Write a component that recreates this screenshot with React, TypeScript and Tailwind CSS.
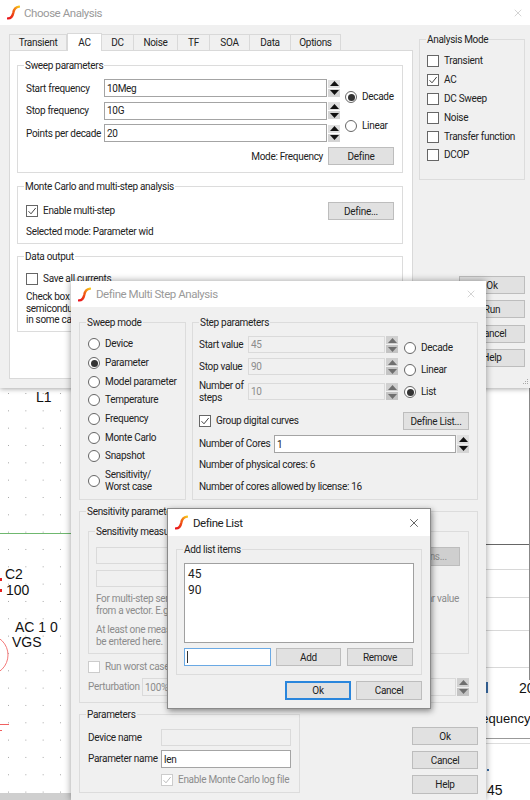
import type { ReactNode } from 'react'
import { X } from 'lucide-react'

const tabs = [
  { name: 'Transient', w: 'w-[58px]' },
  { name: 'AC', w: 'w-[35px]' },
  { name: 'DC', w: 'w-[32px]' },
  { name: 'Noise', w: 'w-[44px]' },
  { name: 'TF', w: 'w-[32px]' },
  { name: 'SOA', w: 'w-[40px]' },
  { name: 'Data', w: 'w-[41px]' },
  { name: 'Options', w: 'w-[50px]' },
]

function Logo() {
  return (
    <svg width="13" height="15" viewBox="0 0 13 15" className="shrink-0">
      <defs>
        <linearGradient id="logoGrad" gradientUnits="userSpaceOnUse" x1="1" y1="14" x2="12" y2="1">
          <stop offset="0" stopColor="#e8101c" />
          <stop offset="0.55" stopColor="#f05a14" />
          <stop offset="1" stopColor="#f8c81c" />
        </linearGradient>
      </defs>
      <path d="M1 13.4C5 13.4 5.8 10.4 6.4 7.4C7 4 8.6 2 12 1.6" fill="none" stroke="url(#logoGrad)" strokeWidth="2.4" strokeLinecap="round" />
    </svg>
  )
}

function Group({ title, bg, className, children }: { title: string; bg: string; className: string; children: ReactNode }) {
  return (
    <div className={`relative border border-[#dcdcdc] ${className}`}>
      <span className={`absolute -top-[7px] left-[6px] whitespace-nowrap px-[1px] leading-[14px] text-[#222] ${bg}`}>{title}</span>
      {children}
    </div>
  )
}

function Radio({ on }: { on?: boolean }) {
  return (
    <span className="flex h-[12px] w-[12px] shrink-0 items-center justify-center rounded-full border border-[#666] bg-white">
      {on && <span className="h-[7px] w-[7px] rounded-full bg-[#333]" />}
    </span>
  )
}

function Check({ on, dim }: { on?: boolean; dim?: boolean }) {
  return (
    <span className={`flex h-[12px] w-[12px] shrink-0 items-center justify-center border bg-white ${dim ? 'border-[#ccc]' : 'border-[#666]'}`}>
      {on && (
        <svg width="10" height="10" viewBox="0 0 10 10" fill="none" stroke={dim ? '#bbb' : '#444'} strokeWidth="1">
          <path d="M1.5 5.2L4 7.8L8.7 2" />
        </svg>
      )}
    </span>
  )
}

function Spin({ dim, className = 'h-[17px]' }: { dim?: boolean; className?: string }) {
  const fill = dim ? '#6f6f6f' : '#111'
  return (
    <div className={`flex w-[12px] shrink-0 flex-col gap-px ${className}`}>
      <div className={`flex flex-1 items-center justify-center ${dim ? 'bg-[#d0d0d0]' : 'bg-[#e0e0e0]'}`}>
        <svg width="9" height="5" viewBox="0 0 9 5"><path d="M4.5 0L9 5H0Z" fill={fill} /></svg>
      </div>
      <div className={`flex flex-1 items-center justify-center ${dim ? 'bg-[#c4c4c4]' : 'bg-[#d4d4d4]'}`}>
        <svg width="9" height="5" viewBox="0 0 9 5"><path d="M0 0H9L4.5 5Z" fill={fill} /></svg>
      </div>
    </div>
  )
}

function Field({ value, dim, className }: { value?: string; dim?: boolean; className: string }) {
  return (
    <div className={`flex items-center overflow-hidden border pl-[2px] pt-px ${dim ? 'border-[#dadada] bg-[#f0f0f0] text-[#8c8c8c]' : 'border-[#a4a4a4] bg-white'} ${className}`}>
      {value}
    </div>
  )
}

function Btn({ label, dim, blue, className = 'h-[18px] w-[66px]' }: { label: string; dim?: boolean; blue?: boolean; className?: string }) {
  return (
    <div className={`flex shrink-0 items-center justify-center border pt-px ${blue ? 'border-2 border-[#2a86dc]' : 'border-[#bdbdbd]'} ${dim ? 'bg-[#cfcfcf] text-[#8c8c8c]' : 'bg-[#e1e1e1]'} ${className}`}>
      {label}
    </div>
  )
}

function Chooser({ label, on, className = 'h-[18.8px]' }: { label: string; on?: boolean; className?: string }) {
  return (
    <div className={`flex items-center gap-[5px] whitespace-nowrap ${className}`}>
      <Check on={on} />
      <span>{label}</span>
    </div>
  )
}

function RadioRow({ label, on, className = 'h-[18.7px]' }: { label: ReactNode; on?: boolean; className?: string }) {
  return (
    <div className={`flex items-center gap-[5px] whitespace-nowrap leading-[12px] ${className}`}>
      <Radio on={on} />
      <span>{label}</span>
    </div>
  )
}

function SweepRow({ label, value }: { label: string; value: string }) {
  return (
    <div className="flex h-[18px] items-center">
      <span className="w-[78px] shrink-0 whitespace-nowrap pt-px">{label}</span>
      <Field value={value} className="h-[18px] w-[223px]" />
      <Spin className="ml-px h-[17px]" />
    </div>
  )
}

function StepRow({ label, value }: { label: ReactNode; value: string }) {
  return (
    <div className="flex h-[17px] items-center whitespace-nowrap leading-[12px]">
      <span className="w-[49px] shrink-0 pt-px">{label}</span>
      <Field value={value} dim className="h-[17px] w-[137px]" />
      <Spin dim className="ml-px h-[17px]" />
    </div>
  )
}

function ChooseAnalysis() {
  return (
    <div className="absolute left-0 top-0 flex h-[388px] w-[530px] flex-col bg-[#f0f0f0] shadow-[0_1px_5px_rgba(0,0,0,0.35)]">
      <div className="flex h-[25px] shrink-0 items-center bg-white pl-[7px] pr-[6px]">
        <Logo />
        <span className="ml-[4px] flex-1 text-[11.5px] tracking-[-0.45px] text-[#9a9a9a]">Choose Analysis</span>
        <X size={12} strokeWidth={1} className="text-[#a8a8a8]" />
      </div>
      <div className="relative flex flex-1 pl-[9px] pt-[9px]">
        <div className="flex w-[404px] flex-col">
          <div className="flex h-[16px] items-end">
            {tabs.map(t => t.name === 'AC' ? (
              <div key={t.name} className={`z-10 -mb-px flex h-[18px] items-center justify-center border border-b-0 border-[#d9d9d9] bg-white ${t.w}`}>{t.name}</div>
            ) : (
              <div key={t.name} className={`flex h-[16px] items-center justify-center border border-b-0 border-l-0 border-[#d9d9d9] bg-[#f0f0f0] first:border-l ${t.w}`}>{t.name}</div>
            ))}
          </div>
          <div className="h-[329px] border border-[#d9d9d9] bg-white pl-[7px] pr-[9px] pt-[14px]">
            <Group title="Sweep parameters" bg="bg-white" className="h-[108px] pl-[8px] pt-[13px]">
              <div className="flex">
                <div className="flex flex-col gap-[4.5px]">
                  <SweepRow label="Start frequency" value="10Meg" />
                  <SweepRow label="Stop frequency" value="10G" />
                  <SweepRow label="Points per decade" value="20" />
                </div>
                <div className="ml-[5px] flex flex-col pt-[9px]">
                  <RadioRow label="Decade" on />
                  <RadioRow label="Linear" className="mt-[10px] h-[18.7px]" />
                </div>
              </div>
              <div className="mt-[5px] flex items-center justify-end gap-[5px] pr-[8px]">
                <span className="pt-px">Mode: Frequency</span>
                <Btn label="Define" />
              </div>
            </Group>
            <Group title="Monte Carlo and multi-step analysis" bg="bg-white" className="mt-[13px] h-[58px] pl-[8px] pr-[8px] pt-[15px]">
              <div className="flex items-center justify-between">
                <Chooser label="Enable multi-step" on className="h-[18px]" />
                <Btn label="Define..." />
              </div>
              <div className="mt-[5px]">Selected mode: Parameter wid</div>
            </Group>
            <Group title="Data output" bg="bg-white" className="mt-[12px] h-[76px] pl-[8px] pt-[14px]">
              <Chooser label="Save all currents" className="h-[16px]" />
              <div className="mt-[4px] leading-[11.5px]">
                Check box to save<br />semiconductor device<br />in some cases
              </div>
            </Group>
          </div>
        </div>
        <div className="ml-[6px] flex w-[106px] flex-col pt-[5px]">
          <Group title="Analysis Mode" bg="bg-[#f0f0f0]" className="h-[141px] pl-[7px] pt-[12px]">
            <Chooser label="Transient" />
            <Chooser label="AC" on />
            <Chooser label="DC Sweep" />
            <Chooser label="Noise" />
            <Chooser label="Transfer function" />
            <Chooser label="DCOP" />
          </Group>
          <div className="mt-[96px] flex flex-col items-end gap-[6.3px]">
            <Btn label="Ok" />
            <Btn label="Run" />
            <Btn label="Cancel" />
            <Btn label="Help" />
          </div>
        </div>
        <svg width="8" height="8" viewBox="0 0 8 8" className="absolute bottom-[1px] right-[1px]">
          <path d="M6 0h1v1H6zM4 2h1v1H4zM6 2h1v1H6zM2 4h1v1H2zM4 4h1v1H4zM6 4h1v1H6z" fill="#a8a8a8" />
        </svg>
      </div>
    </div>
  )
}

function MultiStep() {
  return (
    <div className="absolute left-[71px] top-[281px] flex h-[519px] w-[415px] flex-col bg-[#f0f0f0] shadow-[0_0_7px_rgba(0,0,0,0.4)]">
      <div className="flex h-[26px] shrink-0 items-center bg-white pl-[7px] pr-[9px]">
        <Logo />
        <span className="ml-[5px] flex-1 text-[11.5px] tracking-[-0.45px] text-[#9a9a9a]">Define Multi Step Analysis</span>
        <X size={12} strokeWidth={1} className="text-[#a8a8a8]" />
      </div>
      <div className="flex flex-col pl-[8px] pr-[8px] pt-[15px]">
        <div className="flex gap-[6px]">
          <Group title="Sweep mode" bg="bg-[#f0f0f0]" className="h-[178px] w-[107px] pl-[8px] pt-[12px]">
            <RadioRow label="Device" />
            <RadioRow label="Parameter" on />
            <RadioRow label="Model parameter" />
            <RadioRow label="Temperature" />
            <RadioRow label="Frequency" />
            <RadioRow label="Monte Carlo" />
            <RadioRow label="Snapshot" />
            <RadioRow label={<>Sensitivity/<br />Worst case</>} className="mt-[3px] h-[24px]" />
          </Group>
          <Group title="Step parameters" bg="bg-[#f0f0f0]" className="h-[178px] w-[286px] pl-[6px] pt-[13px]">
            <div className="flex">
              <div className="flex flex-col">
                <StepRow label="Start value" value="45" />
                <div className="mt-[5px]"><StepRow label="Stop value" value="90" /></div>
                <div className="mt-[8px]"><StepRow label={<>Number of<br />steps</>} value="10" /></div>
              </div>
              <div className="ml-[6px] flex flex-col pt-[1px]">
                <RadioRow label="Decade" on={false} className="h-[22px]" />
                <RadioRow label="Linear" className="h-[22px]" />
                <RadioRow label="List" on className="h-[22px]" />
              </div>
            </div>
            <div className="mt-[9px] flex items-center justify-between pr-[8px]">
              <Chooser label="Group digital curves" on className="h-[18px]" />
              <Btn label="Define List..." />
            </div>
            <div className="mt-[5px] flex items-center pr-[8px]">
              <span className="w-[75px] shrink-0 whitespace-nowrap">Number of Cores</span>
              <Field value="1" className="h-[18px] flex-1" />
              <Spin className="ml-px h-[18px]" />
            </div>
            <div className="mt-[5px] leading-[14px]">Number of physical cores: 6</div>
            <div className="mt-[8px] leading-[14px]">Number of cores allowed by license: 16</div>
          </Group>
        </div>
        <Group title="Sensitivity parameters" bg="bg-[#f0f0f0]" className="mt-[11px] h-[192px] pl-[8px] pr-[8px] pt-[19px] text-[#8c8c8c]">
          <Group title="Sensitivity measures" bg="bg-[#f0f0f0]" className="h-[123px] pl-[7px] pr-[8px] pt-[15px]">
            <div className="flex items-start justify-between">
              <div className="flex flex-col gap-[6px]">
                <Field dim className="h-[17px] w-[290px]" />
                <Field dim className="h-[17px] w-[290px]" />
              </div>
              <Btn label="Options..." dim className="h-[19px] w-[66px]" />
            </div>
            <div className="mt-[6px] flex justify-between pr-[1px] leading-[12px]">
              <span className="whitespace-nowrap">For multi-step sensitivity,<br />from a vector. E.g. the max</span>
              <span>scalar value</span>
            </div>
            <div className="mt-[7px] whitespace-nowrap leading-[12px]">
              At least one measure must<br />be entered here.
            </div>
          </Group>
          <div className="mt-[7px] flex h-[12px] items-center gap-[5px]">
            <Check dim />
            <span>Run worst case</span>
          </div>
          <div className="mt-[5px] flex h-[18px] items-center">
            <span className="w-[54px] shrink-0 whitespace-nowrap">Perturbation</span>
            <Field value="100%" dim className="h-[18px] flex-1" />
            <Spin dim className="ml-px h-[18px]" />
          </div>
        </Group>
        <div className="mt-[11px] flex justify-between">
          <Group title="Parameters" bg="bg-[#f0f0f0]" className="h-[79px] w-[221px] pl-[8px] pt-[14px]">
            <div className="flex h-[17px] items-center">
              <span className="w-[73px] shrink-0 whitespace-nowrap">Device name</span>
              <Field dim className="h-[17px] w-[130px]" />
            </div>
            <div className="mt-[4px] flex h-[18px] items-center">
              <span className="w-[73px] shrink-0 whitespace-nowrap">Parameter name</span>
              <Field value="len" className="h-[18px] w-[130px]" />
            </div>
            <div className="ml-[73px] mt-[6px] flex h-[12px] items-center gap-[5px] text-[#8c8c8c]">
              <Check on dim />
              <span className="whitespace-nowrap">Enable Monte Carlo log file</span>
            </div>
          </Group>
          <div className="flex flex-col gap-[6px] pt-[13px]">
            <Btn label="Ok" />
            <Btn label="Cancel" />
            <Btn label="Help" className="h-[19px] w-[66px]" />
          </div>
        </div>
      </div>
    </div>
  )
}

function DefineList() {
  return (
    <div className="absolute left-[167px] top-[508px] flex h-[201px] w-[264px] flex-col border border-[#8a8a8a] bg-[#f0f0f0] shadow-[1px_2px_6px_rgba(0,0,0,0.45)]">
      <div className="flex h-[27px] shrink-0 items-center bg-white pl-[7px] pr-[9px]">
        <Logo />
        <span className="ml-[5px] flex-1 text-[11.5px] tracking-[-0.45px] text-[#222]">Define List</span>
        <X size={14} strokeWidth={1.2} className="text-[#222]" />
      </div>
      <div className="flex flex-col pl-[8px] pr-[8px] pt-[13px]">
        <Group title="Add list items" bg="bg-[#f0f0f0]" className="h-[126px] w-[246px] pl-[7px] pt-[13px]">
          <div className="h-[80px] w-[230px] border border-[#a0a0a0] bg-white pl-[3px] pt-[2px] text-[12px] leading-[16px] tracking-normal">
            45<br />90
          </div>
          <div className="mt-[5px] flex w-[230px] items-center gap-[5px]">
            <div className="flex h-[18px] w-[87px] items-center border border-[#6aa9e4] bg-white pl-[2px]">
              <span className="h-[12px] w-px bg-[#333]" />
            </div>
            <Btn label="Add" className="h-[18px] w-[65px]" />
            <Btn label="Remove" className="ml-px h-[18px] w-[66px]" />
          </div>
        </Group>
        <div className="mt-[6px] flex w-[246px] justify-end gap-[5px]">
          <Btn label="Ok" blue className="h-[19px] w-[66px]" />
          <Btn label="Cancel" className="h-[19px] w-[66px]" />
        </div>
      </div>
    </div>
  )
}

function Schematic() {
  const dots: { x: number; y: number }[] = []
  for (let y = 393; y < 793; y += 17.33) {
    for (let x = 8; x < 70; x += 17.33) dots.push({ x, y })
  }
  return (
    <div className="absolute inset-0 font-['Liberation_Sans',sans-serif] text-[14px] leading-[16px] tracking-normal text-[#111]">
      <svg width="530" height="800" className="absolute left-0 top-0">
        {dots.map((d, i) => (
          <rect key={i} x={d.x} y={d.y} width="1" height="1" fill="#a8a8a8" />
        ))}
        <line x1="0" y1="533.5" x2="71" y2="533.5" stroke="#6fb86f" />
        <circle cx="-12" cy="655" r="20" fill="none" stroke="#f47a7a" />
        <line x1="0" y1="724.5" x2="9" y2="724.5" stroke="#f06060" />
        <line x1="0" y1="730.5" x2="2" y2="730.5" stroke="#f06060" />
        <rect x="0" y="578" width="2" height="3" fill="#e62020" />
        <rect x="0" y="589" width="2" height="3" fill="#e62020" />
        <line x1="486" y1="544.5" x2="530" y2="544.5" stroke="#666" />
        <line x1="486" y1="569.5" x2="530" y2="569.5" stroke="#d8d8d8" />
        <line x1="486" y1="597.5" x2="530" y2="597.5" stroke="#d8d8d8" />
        <line x1="486" y1="630.5" x2="530" y2="630.5" stroke="#d8d8d8" />
        <line x1="486" y1="667.5" x2="530" y2="667.5" stroke="#d8d8d8" />
        <line x1="529.5" y1="388" x2="529.5" y2="680" stroke="#888" />
        <line x1="486" y1="738.5" x2="530" y2="738.5" stroke="#999" />
        <line x1="486" y1="743.5" x2="530" y2="743.5" stroke="#ddd" />
        <rect x="486" y="682" width="2" height="11" fill="#3a6ea8" />
        <rect x="487" y="769" width="2" height="2" fill="#3a6ea8" />
        <rect x="0" y="793" width="71" height="7" fill="#cfcfcf" />
      </svg>
      <span className="absolute left-[36px] top-[389px]">L1</span>
      <span className="absolute left-[5px] top-[566px]">C2</span>
      <span className="absolute left-[6px] top-[582px]">100</span>
      <span className="absolute left-[15px] top-[619px]">AC 1 0</span>
      <span className="absolute left-[12px] top-[634px]">VGS</span>
      <span className="absolute left-[519px] top-[680px]">20</span>
      <span className="absolute left-[469px] top-[711px] text-[13px]">Frequency</span>
      <span className="absolute left-[487px] top-[782px]">45</span>
    </div>
  )
}

export default function App() {
  return (
    <div className="relative h-[800px] w-[530px] overflow-hidden bg-white font-['Roboto',sans-serif] text-[10px] leading-[14px] tracking-[-0.3px] text-[#222]">
      <Schematic />
      <ChooseAnalysis />
      <MultiStep />
      <DefineList />
    </div>
  )
}
